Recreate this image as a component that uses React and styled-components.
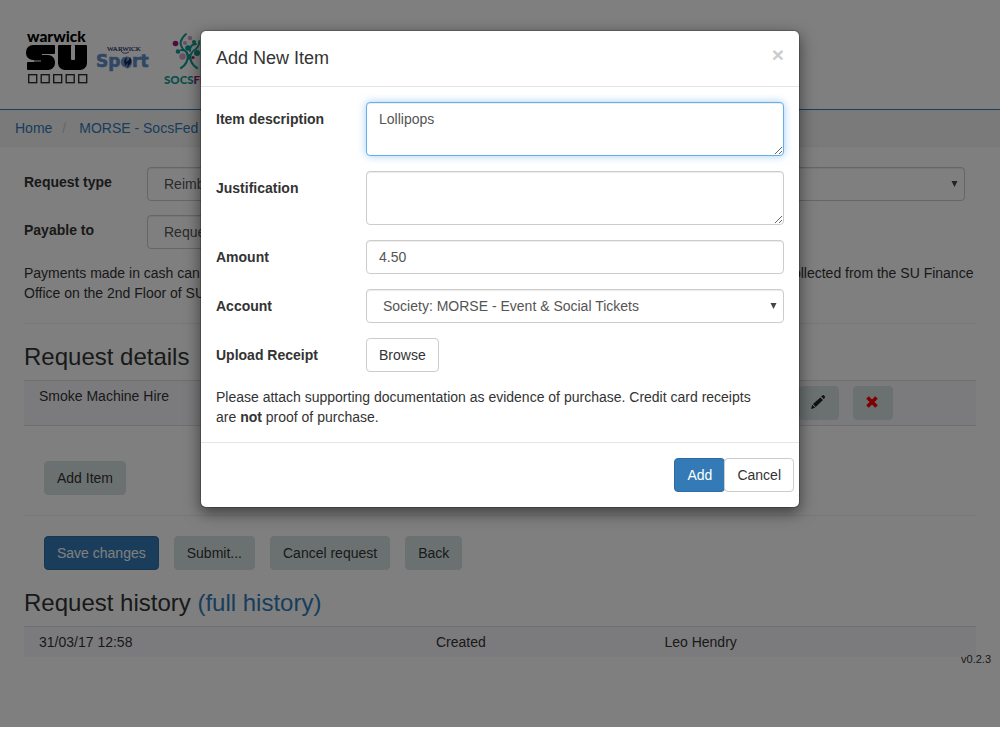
import React from "react";
import styled, { createGlobalStyle, css } from "styled-components";

const Global = createGlobalStyle`
  *, *::before, *::after { box-sizing: border-box; }
  body {
    margin: 0;
    background: #fff;
    color: #333;
    font: 14px/20px "Liberation Sans", Arial, sans-serif;
  }
  button, input, select, textarea { font: inherit; }
`;

const Page = styled.div`
  position: relative;
  min-height: calc(100vh - 3px);
  margin-bottom: 3px;
  background: #fff;
`;

const Header = styled.header`
  display: flex;
  height: 110px;
  padding: 20px 24px 0;
  border-bottom: 1px solid #337ab7;
`;

const Breadcrumb = styled.ol`
  display: flex;
  margin: 0;
  padding: 8px 15px;
  list-style: none;
  background: #f5f5f5;
  border-bottom: 1px solid #eee;

  li + li::before {
    content: "/";
    padding: 0 13px 0 10px;
    color: #ccc;
  }
`;

const Link = styled.a`
  color: #337ab7;
  text-decoration: none;
`;

const Main = styled.main`
  padding: 20px 24px 0;
`;

const RequestRow = styled.div`
  display: grid;
  grid-template-columns: 123px minmax(0, 1fr);
  margin: 0 11px 14px 0;
`;

const Label = styled.label`
  padding-top: ${(p) => (p.$deep ? 7 : 5)}px;
  font-weight: 700;
`;

const Text = styled.p`
  margin: 0;
`;

const HelpText = styled(Text)`
  padding-right: 15px;
`;

const Rule = styled.hr`
  height: 1px;
  margin: 20px 0;
  border: 0;
  background: #eee;
`;

const Heading = styled.h3`
  margin: 20px 0 10px;
  font-size: 24px;
  font-weight: 400;
  line-height: 26px;
`;

const Table = styled.table`
  width: 100%;
  border-collapse: separate;
  border-spacing: 0;
  table-layout: fixed;
  background: #f7f7fb;
  border-top: 1px solid #d5e1e1;
  border-bottom: ${(p) => (p.$closed ? "1px solid #ddd" : "0")};

  td {
    padding: 5px 15px;
    vertical-align: top;
  }
`;

const ButtonBar = styled.div`
  display: flex;
  gap: 15px;
  padding-left: 20px;
  padding-top: ${(p) => (p.$spaced ? 35 : 0)}px;
`;

const RowActions = styled.div`
  display: flex;
  justify-content: flex-end;
  gap: 14px;
  padding-right: 68px;
`;

const tones = {
  soft: css`
    color: #333;
    background: #d5e3e1;
    border-color: #d5e3e1;
  `,
  primary: css`
    color: #fff;
    background: #337ab7;
    border-color: #2e6da4;
  `,
  plain: css`
    color: #333;
    background: #fff;
    border-color: #ccc;
  `,
};

const Button = styled.button`
  height: 34px;
  padding: 6px 12px;
  border: 1px solid;
  border-radius: 4px;
  white-space: nowrap;
  cursor: pointer;
  ${(p) => tones[p.$tone || "soft"]}
`;

const IconButton = styled(Button)`
  display: flex;
  align-items: center;
  justify-content: center;
  width: 40px;
  padding: 0 2px 2px 0;
`;

const Version = styled.footer`
  margin-top: -6px;
  padding-right: 9px;
  text-align: right;
  font-size: 11px;
  line-height: 16px;
`;

const Overlay = styled.div`
  position: absolute;
  inset: 0;
  display: flex;
  align-items: flex-start;
  justify-content: center;
  padding: 30px 10px;
  background: rgba(0, 0, 0, 0.5);
`;

const Dialog = styled.section`
  width: 100%;
  max-width: 600px;
  background: #fff;
  background-clip: padding-box;
  border: 1px solid rgba(0, 0, 0, 0.2);
  border-radius: 6px;
  box-shadow: 0 5px 15px rgba(0, 0, 0, 0.5);
`;

const DialogHeader = styled.header`
  display: flex;
  align-items: flex-start;
  justify-content: space-between;
  padding: 15px;
  border-bottom: 1px solid #e5e5e5;
`;

const DialogTitle = styled.h4`
  margin: 0;
  font-size: 18px;
  font-weight: 400;
  line-height: 25px;
`;

const CloseButton = styled.button`
  padding: 0;
  border: 0;
  background: none;
  color: #ccc;
  font-size: 21px;
  font-weight: 700;
  line-height: 18px;
  cursor: pointer;
`;

const DialogBody = styled.div`
  display: grid;
  gap: 15px;
  padding: 15px;
`;

const Field = styled.div`
  display: grid;
  grid-template-columns: 150px minmax(0, 1fr);
  justify-items: start;
`;

const control = css`
  display: block;
  width: 100%;
  height: 34px;
  margin: 0;
  padding: 6px 12px;
  color: #555;
  background: #fff;
  border: 1px solid #ccc;
  border-radius: 4px;
  box-shadow: inset 0 1px 1px rgba(0, 0, 0, 0.075);
  outline: 0;
`;

const Input = styled.input`
  ${control}
`;

const TextArea = styled.textarea`
  ${control}
  height: 54px;
  resize: vertical;
  ${(p) =>
    p.$active &&
    css`
      border-color: #66afe9;
      box-shadow: inset 0 1px 1px rgba(0, 0, 0, 0.075), 0 0 8px rgba(102, 175, 233, 0.6);
    `}
`;

const SelectBox = styled.div`
  position: relative;
  width: ${(p) => (p.$half ? "50%" : "100%")};

  select {
    ${control}
    padding: 6px 16px;
    appearance: none;
  }

  svg {
    position: absolute;
    top: 14px;
    right: 7px;
    pointer-events: none;
  }
`;

const DialogFooter = styled.footer`
  display: flex;
  justify-content: flex-end;
  padding: 15px 5px 15px 15px;
  border-top: 1px solid #e5e5e5;

  button + button {
    margin-left: -1px;
  }
`;

function Select({ id, value, half }) {
  return (
    <SelectBox $half={half}>
      <select id={id} defaultValue={value}>
        <option>{value}</option>
      </select>
      <svg width="7" height="6" viewBox="0 0 7 6" aria-hidden="true">
        <path d="M0.5 0h6L3.5 6z" fill="#444" />
      </svg>
    </SelectBox>
  );
}

function Logos() {
  return (
    <svg width="200" height="72" viewBox="24 20 200 72" role="img" aria-label="Warwick SU, Warwick Sport, SocsFed">
      <text x="27" y="42" fontFamily="Lato, sans-serif" fontWeight="900" fontSize="15.500" fill="#000">warwick</text>
      <g fill="#000">
        <rect x="26" y="45" width="22" height="15" rx="7" />
        <rect x="34" y="45" width="21" height="9" rx="1" />
        <rect x="34" y="55" width="21" height="15" rx="7" />
        <rect x="27" y="62" width="22" height="8" rx="1" />
        <rect x="34" y="53" width="14" height="9" />
        <rect x="58" y="45" width="29" height="18" rx="1" />
        <rect x="58" y="52" width="29" height="18" rx="7" />
      </g>
      <g fill="#fff">
        <rect x="42" y="54" width="13" height="1" />
        <rect x="27" y="60.500" width="14" height="1" />
        <rect x="71" y="45" width="4" height="15" rx="1" />
      </g>
      <g fill="none" stroke="#222" strokeWidth="1.3">
        {[28.7, 41.2, 53.7, 66.2, 78.7].map((x) => (
          <rect key={x} x={x} y="74.7" width="8" height="8" />
        ))}
      </g>

      <text x="107" y="51" fontFamily="Liberation Serif, serif" fontSize="7" fill="#28306e" stroke="#28306e" strokeWidth="0.2">WARWICK</text>
      <path d="M121 51q3 4 8 1" fill="none" stroke="#28306e" strokeWidth="0.8" />
      <text x="96" y="67" fontFamily="DejaVu Sans, sans-serif" fontWeight="700" fontSize="17" fill="#5f8dcb" stroke="#5f8dcb" strokeWidth="0.6">Sport</text>
      <ellipse cx="127.500" cy="62.500" rx="4.200" ry="6" fill="#6f9ad5" />
      <path d="M124 61q1-3 3-4l-1 5 3-2 1-3q2 3 1 6l-4 5 1-5-3 3z" fill="#182452" />

      <g fill="none" stroke="#129c92" strokeLinecap="round">
        <path d="M181 68q7-4 7-13M197 68q-7-4-7-13" strokeWidth="2.200" />
        <path d="M188 59q0-7-5-10-6-7 3-15M190 59q0-7 6-10 4-4 3-8M188 55q-1-5-7-5M190 51q0-7 6-7" strokeWidth="1.800" />
      </g>
      <g fill="#129c92">
        <circle cx="178" cy="51.500" r="2.300" />
        <circle cx="188" cy="48" r="2.800" />
        <circle cx="197" cy="53" r="3" />
        <circle cx="194" cy="42" r="2" />
      </g>
      <g fill="#9c1d76">
        <circle cx="175.500" cy="43.500" r="2.800" />
        <circle cx="193" cy="57.500" r="1.600" />
      </g>
      <g fill="#d9a0c8">
        <circle cx="190" cy="38" r="2.300" />
        <circle cx="182.500" cy="56.500" r="3.200" />
        <circle cx="185" cy="43" r="2" />
      </g>
      <text x="164" y="83.500" fontFamily="Lato, sans-serif" fontWeight="900" fontSize="11.500" fill="#129c92">
        SOCS<tspan fill="#9c1d76">FED</tspan>
      </text>
    </svg>
  );
}

function PencilIcon() {
  return (
    <svg width="16" height="16" viewBox="0 0 16 16" fill="#222" aria-hidden="true">
      <path d="M1 15l1.200-4.200 3 3z" />
      <path d="M3 10l7.300-6.600 2.700 2.700-7.300 6.900z" />
      <path d="M11.200 2.600l1.100-1.100q1-.8 1.900.1l.4.400q.9 1 .1 1.900l-1 1.100z" />
    </svg>
  );
}

function RemoveIcon() {
  return (
    <svg width="16" height="16" viewBox="0 0 16 16" aria-hidden="true">
      <path d="M3.500 3.500l9 9M12.500 3.500l-9 9" stroke="#f00" strokeWidth="3.600" />
    </svg>
  );
}

export default function App() {
  return (
    <Page>
      <Global />
      <Header>
        <Logos />
      </Header>
      <nav aria-label="Breadcrumb">
        <Breadcrumb>
          <li><Link href="#home">Home</Link></li>
          <li><Link href="#society">MORSE - SocsFed</Link></li>
        </Breadcrumb>
      </nav>

      <Main>
        <RequestRow>
          <Label htmlFor="request-type">Request type</Label>
          <Select id="request-type" value="Reimbursement" />
        </RequestRow>
        <RequestRow>
          <Label htmlFor="payable-to">Payable to</Label>
          <Select id="payable-to" value="Requester" half />
        </RequestRow>
        <Text>
          Payments made in cash can only be made to the person who made the request after this has been approved, and must be
          collected from the SU Finance Office on the 2nd Floor of SUHQ.
        </Text>
        <Rule />

        <Heading>Request details</Heading>
        <Table $closed>
          <tbody>
            <tr>
              <td>Smoke Machine Hire</td>
              <td>
                <RowActions>
                  <IconButton type="button" aria-label="Edit item"><PencilIcon /></IconButton>
                  <IconButton type="button" aria-label="Remove item"><RemoveIcon /></IconButton>
                </RowActions>
              </td>
            </tr>
          </tbody>
        </Table>
        <ButtonBar $spaced>
          <Button type="button">Add Item</Button>
        </ButtonBar>
        <Rule />
        <ButtonBar>
          <Button type="button" $tone="primary">Save changes</Button>
          <Button type="button">Submit...</Button>
          <Button type="button">Cancel request</Button>
          <Button type="button">Back</Button>
        </ButtonBar>

        <Heading>
          Request history <Link href="#history">(full history)</Link>
        </Heading>
        <Table>
          <colgroup>
            <col width="41.7%" />
            <col width="24%" />
            <col />
          </colgroup>
          <tbody>
            <tr>
              <td>31/03/17 12:58</td>
              <td>Created</td>
              <td>Leo Hendry</td>
            </tr>
          </tbody>
        </Table>
      </Main>
      <Version>v0.2.3</Version>

      <Overlay>
        <Dialog role="dialog" aria-modal="true" aria-labelledby="dialog-title">
          <DialogHeader>
            <DialogTitle id="dialog-title">Add New Item</DialogTitle>
            <CloseButton type="button" aria-label="Close">×</CloseButton>
          </DialogHeader>
          <DialogBody>
            <Field>
              <Label $deep htmlFor="description">Item description</Label>
              <TextArea $active id="description" defaultValue="Lollipops" />
            </Field>
            <Field>
              <Label $deep htmlFor="justification">Justification</Label>
              <TextArea id="justification" />
            </Field>
            <Field>
              <Label $deep htmlFor="amount">Amount</Label>
              <Input id="amount" type="text" defaultValue="4.50" />
            </Field>
            <Field>
              <Label $deep htmlFor="account">Account</Label>
              <Select id="account" value="Society: MORSE - Event & Social Tickets" />
            </Field>
            <Field>
              <Label $deep htmlFor="receipt">Upload Receipt</Label>
              <Button id="receipt" type="button" $tone="plain">Browse</Button>
            </Field>
            <HelpText>
              Please attach supporting documentation as evidence of purchase. Credit card receipts are <b>not</b> proof of
              purchase.
            </HelpText>
          </DialogBody>
          <DialogFooter>
            <Button type="button" $tone="primary">Add</Button>
            <Button type="button" $tone="plain">Cancel</Button>
          </DialogFooter>
        </Dialog>
      </Overlay>
    </Page>
  );
}
